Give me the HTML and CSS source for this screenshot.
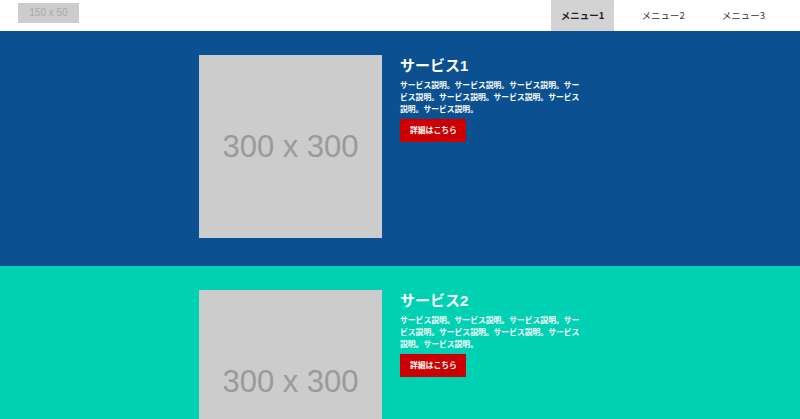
FILE: index.html
```html
<!DOCTYPE html>
<html lang="ja">
<head>
<meta charset="utf-8">
<title>サービス</title>
<link rel="stylesheet" href="styles.css">
</head>
<body>
<header class="header">
  <div class="logo">150 x 50</div>
  <nav class="nav">
    <a class="nav-item is-active" href="#">メニュー1</a>
    <a class="nav-item" href="#">メニュー2</a>
    <a class="nav-item" href="#">メニュー3</a>
  </nav>
</header>
<section class="service service-blue">
  <div class="container">
    <div class="thumb">300 x 300</div>
    <div class="body">
      <h2 class="title">サービス1</h2>
      <p class="desc">サービス説明。サービス説明。サービス説明。サービス説明。サービス説明。サービス説明。サービス説明。サービス説明。</p>
      <a class="btn" href="#">詳細はこちら</a>
    </div>
  </div>
</section>
<section class="service service-teal">
  <div class="container">
    <div class="thumb">300 x 300</div>
    <div class="body">
      <h2 class="title">サービス2</h2>
      <p class="desc">サービス説明。サービス説明。サービス説明。サービス説明。サービス説明。サービス説明。サービス説明。サービス説明。</p>
      <a class="btn" href="#">詳細はこちら</a>
    </div>
  </div>
</section>
</body>
</html>
```
FILE: styles.css
```css
* { box-sizing: border-box; }
html, body { margin: 0; padding: 0; }
body {
  font-family: "Liberation Sans", "Noto Sans CJK JP", sans-serif;
  background: #fff;
  overflow: hidden;
}
.header {
  height: 31px;
  display: flex;
  justify-content: space-between;
  align-items: flex-start;
  padding: 0 25px 0 18px;
  background: #fff;
}
.logo {
  margin-top: 3px;
  width: 61px;
  height: 20px;
  background: #cccccc;
  color: #a9a9a9;
  font-size: 10px;
  line-height: 20px;
  text-align: center;
}
.nav {
  display: flex;
  gap: 17px;
  height: 31px;
}
.nav-item {
  display: block;
  height: 31px;
  line-height: 31px;
  padding: 0 10px;
  font-family: "Noto Sans CJK JP", sans-serif;
  font-size: 9.5px;
  color: #333;
  text-decoration: none;
}
.nav-item.is-active {
  background: #d3d3d3;
  font-weight: bold;
  color: #222;
}
.service {
  padding: 24px 0 28px;
}
.service-blue { background: #0b5090; }
.service-teal { background: #00d1b2; }
.container {
  width: 402px;
  margin: 0 auto;
  display: flex;
  gap: 18px;
  align-items: flex-start;
}
.thumb {
  width: 183px;
  height: 183px;
  flex: none;
  background: #cccccc;
  color: #9a9a9a;
  font-size: 31px;
  display: flex;
  align-items: center;
  justify-content: center;
}
.body {
  width: 183px;
  color: #fff;
}
.title {
  margin: 0;
  font-size: 15px;
  line-height: 21px;
  font-weight: bold;
}
.desc {
  margin: 4px 0 3px;
  font-size: 7.8px;
  line-height: 12px;
  font-weight: bold;
}
.btn {
  display: inline-block;
  height: 23px;
  line-height: 23px;
  padding: 0 9px 0 10px;
  background: #cc0000;
  color: #fff;
  font-size: 7.8px;
  font-weight: bold;
  text-decoration: none;
}
```
